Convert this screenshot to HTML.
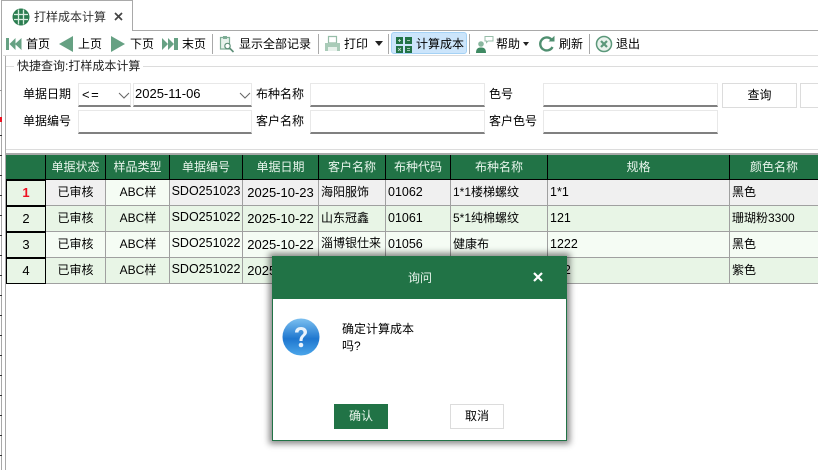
<!DOCTYPE html>
<html lang="zh"><head><meta charset="utf-8"><style>
html,body{margin:0;padding:0;background:#fff}
#p{position:relative;width:818px;height:470px;overflow:hidden;background:#fff;font:12px/16px "Liberation Sans","Noto Sans CJK SC",sans-serif;color:#000}
#p div,#p span,#p svg{position:absolute}
.t{white-space:nowrap}
.l{background:#a9a9a9}
.tk{left:0;width:2px;height:1px;background:#333}
.inp{background:#fff;border:1px solid #e8e8e8;border-bottom:2px solid #808080;box-sizing:border-box;height:24px}
.c{box-sizing:border-box;text-align:center;white-space:nowrap;line-height:25px;height:26px;border-right:1px solid #a0a0a0;border-bottom:1px solid #a0a0a0;overflow:hidden}
.h{background:#217346;color:#e8f5ec;border-right:1px solid #000;height:24px;line-height:24px;border-bottom:0;top:155px}
.left{text-align:left;padding-left:2px}
.n{font-size:12.5px}
.d{font-size:13px}
.num{background:#e8f5e6;border:1px solid #000;border-top-width:2px;border-right-width:1px;font-size:13px;line-height:24px}
</style></head><body><div id="p">

<div class="l" style="left:2px;top:0;width:130px;height:1px"></div>
<div class="l" style="left:1px;top:0;width:1px;height:470px"></div>
<div class="l" style="left:132px;top:0;width:1px;height:31px"></div>
<div class="l" style="left:132px;top:30px;width:686px;height:1px"></div>
<div style="left:3px;top:55px;width:815px;height:1px;background:#ddd"></div>

<div class="tk" style="top:90px;background:#999"></div>
<div style="left:0;top:117px;width:2px;height:5px;background:#ee1122"></div>
<div class="tk" style="top:135px"></div>
<div class="tk" style="top:155px"></div>
<div class="tk" style="top:175px"></div>
<div class="tk" style="top:195px"></div>
<div class="tk" style="top:215px"></div>
<div class="tk" style="top:235px"></div>
<div class="tk" style="top:255px"></div>
<div class="tk" style="top:275px"></div>
<div class="tk" style="top:295px"></div>
<div class="tk" style="top:315px"></div>
<div class="tk" style="top:335px"></div>
<div class="tk" style="top:355px"></div>
<div class="tk" style="top:375px"></div>
<div class="tk" style="top:395px"></div>
<div class="tk" style="top:415px"></div>
<div class="tk" style="top:435px"></div>
<div class="tk" style="top:455px"></div>

<svg style="left:12px;top:8px" width="18" height="18" viewBox="0 0 18 18"><circle cx="9" cy="9" r="8.500" fill="#2b7d50"/><path d="M2 6.500H16M2 11.500H16M6.500 1.500V16.500M11.500 1.500V16.500" stroke="#d9eee0" stroke-width="1.300" fill="none"/></svg>
<span class="t" style="left:34px;top:9px;font-size:12px;color:#333">打样成本计算</span>
<svg style="left:114px;top:12px" width="9" height="9" viewBox="0 0 9 9"><path d="M1 1L8 8M8 1L1 8" stroke="#444" stroke-width="1.700"/></svg>

<svg style="left:6px;top:37px" width="16" height="14" viewBox="0 0 16 14"><path d="M0 1H3V13H0ZM3.500 7L9.500 1V13ZM9 7L15.500 1V13Z" fill="#66a183"/></svg>
<span class="t" style="left:26px;top:36px">首页</span>
<svg style="left:59px;top:36px" width="15" height="16" viewBox="0 0 15 16"><path d="M14 0V16L0 8Z" fill="#66a183"/></svg>
<span class="t" style="left:78px;top:36px">上页</span>
<svg style="left:111px;top:36px" width="15" height="16" viewBox="0 0 15 16"><path d="M0 0V16L14 8Z" fill="#66a183"/></svg>
<span class="t" style="left:130px;top:36px">下页</span>
<svg style="left:162px;top:37px" width="16" height="14" viewBox="0 0 16 14"><path d="M0 1L6 7L0 13ZM6 1L12 7L6 13ZM12 1H16V13H12Z" fill="#66a183"/></svg>
<span class="t" style="left:182px;top:36px">末页</span>
<div class="l" style="left:212px;top:34px;width:1px;height:20px"></div>

<svg style="left:219px;top:35px" width="16" height="18" viewBox="0 0 16 18"><path d="M1.500 2.500H10.500V14H1.500Z" fill="#e8f2ec" stroke="#7fae96" stroke-width="1.200"/><path d="M4 1H8V4H4Z" fill="#7fae96"/><circle cx="8.500" cy="11" r="2.700" fill="#fff" stroke="#5d8f78" stroke-width="1.200"/><path d="M10.500 13L14.500 17" stroke="#5d8f78" stroke-width="1.600"/></svg>
<span class="t" style="left:239px;top:36px">显示全部记录</span>
<div class="l" style="left:318px;top:34px;width:1px;height:20px"></div>

<svg style="left:324px;top:35px" width="17" height="17" viewBox="0 0 17 17"><path d="M4.500 1.500H12.500V8H4.500Z" fill="#fff" stroke="#96bda8" stroke-width="1.200"/><path d="M1 8H16V16H1Z" fill="#a9cbb8"/><path d="M4 12H13V16H4Z" fill="#e7f1eb"/></svg>
<span class="t" style="left:344px;top:36px">打印</span>
<svg style="left:375px;top:41px" width="8" height="5" viewBox="0 0 8 5"><path d="M0 0H8L4 5Z" fill="#222"/></svg>
<div class="l" style="left:388px;top:34px;width:1px;height:20px"></div>

<div style="left:391px;top:32px;width:76px;height:22px;background:#cce5fb;border:1px solid #a5d2f5;border-radius:3px;box-sizing:border-box"></div>
<svg style="left:396px;top:37px" width="16" height="16" viewBox="0 0 16 16"><path d="M0 0H7V7H0ZM9 0H16V7H9ZM0 9H7V16H0ZM9 9H16V16H9Z" fill="#217346"/><path d="M2 3.500H5M3.500 2V5M11 3.500H14M2 11L5 14M5 11L2 14M11 11.500H14M11 13.500H14" stroke="#cfe5d8" stroke-width=".8"/></svg>
<span class="t" style="left:416px;top:36px">计算成本</span>
<div class="l" style="left:469px;top:34px;width:1px;height:20px"></div>

<svg style="left:476px;top:35px" width="18" height="18" viewBox="0 0 18 18"><circle cx="5" cy="9" r="2.800" fill="#8ab79f"/><path d="M0 18C0 13.500 2 12.500 5 12.500S10 13.500 10 18Z" fill="#3f8a63"/><path d="M9 1.500H17V6H12L10.500 7.500V6H9Z" fill="#fff" stroke="#97bda9" stroke-width="1"/></svg>
<span class="t" style="left:496px;top:36px">帮助</span>
<svg style="left:523px;top:42px" width="6" height="4" viewBox="0 0 6 4"><path d="M0 0H6L3 4Z" fill="#222"/></svg>

<svg style="left:538px;top:35px" width="18" height="18" viewBox="0 0 18 18"><path d="M14.500 12A6.500 6.500 0 1 1 13.500 4.500" fill="none" stroke="#4f8f70" stroke-width="2.400"/><path d="M10.500 6.500H16.500V0.800Z" fill="#4f8f70"/></svg>
<span class="t" style="left:559px;top:36px">刷新</span>
<div class="l" style="left:589px;top:34px;width:1px;height:20px"></div>

<svg style="left:595px;top:35px" width="18" height="18" viewBox="0 0 18 18"><circle cx="9" cy="9" r="7.500" fill="#e9f3ed" stroke="#5b987a" stroke-width="1.500"/><path d="M6 6L12 12M12 6L6 12" stroke="#5b987a" stroke-width="2.200"/></svg>
<span class="t" style="left:616px;top:36px">退出</span>

<div style="left:5px;top:66px;width:813px;height:84px;border:1px solid #dcdcdc;box-sizing:border-box;border-right:0"></div>
<span class="t" style="left:14px;top:58px;background:#fff;padding:0 3px;color:#222">快捷查询:打样成本计算</span>
<div class="l" style="left:5px;top:153px;width:813px;height:1px"></div>
<div class="l" style="left:5px;top:56px;width:1px;height:414px"></div>

<span class="t" style="left:23px;top:86px">单据日期</span>
<div class="inp" style="left:78px;top:83px;width:53px"></div>
<span class="t" style="left:82px;top:87px;font-size:13px;letter-spacing:1.500px">&lt;=</span>
<svg style="left:118px;top:92px" width="12" height="7" viewBox="0 0 12 7"><path d="M1 1L6 6L11 1" fill="none" stroke="#666"/></svg>
<div class="inp" style="left:133px;top:83px;width:119px"></div>
<span class="t" style="left:135px;top:86px;font-size:13px">2025-11-06</span>
<svg style="left:239px;top:92px" width="12" height="7" viewBox="0 0 12 7"><path d="M1 1L6 6L11 1" fill="none" stroke="#666"/></svg>
<span class="t" style="left:256px;top:86px">布种名称</span>
<div class="inp" style="left:310px;top:83px;width:175px"></div>
<span class="t" style="left:489px;top:86px">色号</span>
<div class="inp" style="left:543px;top:83px;width:175px"></div>
<div style="left:722px;top:83px;width:75px;height:25px;border:1px solid #dcdcdc;box-sizing:border-box;text-align:center;line-height:23px">查询</div>
<div style="left:800px;top:83px;width:30px;height:25px;border:1px solid #dcdcdc;box-sizing:border-box"></div>

<span class="t" style="left:23px;top:113px">单据编号</span>
<div class="inp" style="left:78px;top:110px;width:174px"></div>
<span class="t" style="left:256px;top:113px">客户名称</span>
<div class="inp" style="left:310px;top:110px;width:175px"></div>
<span class="t" style="left:489px;top:113px">客户色号</span>
<div class="inp" style="left:543px;top:110px;width:175px"></div>

<div class="l" style="left:5px;top:154px;width:813px;height:1px"></div>

<div class="c h" style="left:6px;width:40px"></div>
<div class="c h" style="left:46px;width:60px">单据状态</div>
<div class="c h" style="left:106px;width:64px">样品类型</div>
<div class="c h" style="left:170px;width:73px">单据编号</div>
<div class="c h" style="left:243px;width:76px">单据日期</div>
<div class="c h" style="left:319px;width:67px">客户名称</div>
<div class="c h" style="left:386px;width:65px">布种代码</div>
<div class="c h" style="left:451px;width:97px">布种名称</div>
<div class="c h" style="left:548px;width:182px">规格</div>
<div class="c h" style="left:730px;width:88px;border-right:0">颜色名称</div>
<div style="left:6px;top:179px;width:812px;height:1px;background:#000"></div>

<div style="left:46px;top:180px;width:772px;height:26px;background:#f0f0f0"></div>
<div style="left:106px;top:180px;width:64px;height:26px;background:#f5fcf4"></div>
<div style="left:46px;top:206px;width:772px;height:26px;background:#e8f5e6"></div>
<div style="left:46px;top:232px;width:772px;height:26px;background:#f5fcf4"></div>
<div style="left:46px;top:258px;width:772px;height:26px;background:#e8f5e6"></div>

<div class="c num" style="left:6px;top:179px;width:40px;height:27px;color:#ee1122;font-weight:bold">1</div>
<div class="c num" style="left:6px;top:205px;width:40px;height:27px">2</div>
<div class="c num" style="left:6px;top:231px;width:40px;height:27px">3</div>
<div class="c num" style="left:6px;top:257px;width:40px;height:27px">4</div>

<div class="c" style="left:46px;top:180px;width:60px">已审核</div>
<div class="c" style="left:106px;top:180px;width:64px;padding-left:1px">ABC样</div>
<div class="c n" style="left:170px;top:180px;width:73px;line-height:22px">SDO251023</div>
<div class="c d" style="left:243px;top:180px;width:76px">2025-10-23</div>
<div class="c left" style="left:319px;top:180px;width:67px">海阳服饰</div>
<div class="c left n" style="left:386px;top:180px;width:65px">01062</div>
<div class="c left" style="left:451px;top:180px;width:97px">1*1楼梯螺纹</div>
<div class="c left n" style="left:548px;top:180px;width:182px">1*1</div>
<div class="c left" style="left:730px;top:180px;width:88px;border-right:0">黑色</div>

<div class="c" style="left:46px;top:206px;width:60px">已审核</div>
<div class="c" style="left:106px;top:206px;width:64px;padding-left:1px">ABC样</div>
<div class="c n" style="left:170px;top:206px;width:73px;line-height:22px">SDO251022</div>
<div class="c d" style="left:243px;top:206px;width:76px">2025-10-22</div>
<div class="c left" style="left:319px;top:206px;width:67px">山东冠鑫</div>
<div class="c left n" style="left:386px;top:206px;width:65px">01061</div>
<div class="c left" style="left:451px;top:206px;width:97px">5*1纯棉螺纹</div>
<div class="c left n" style="left:548px;top:206px;width:182px">121</div>
<div class="c left" style="left:730px;top:206px;width:88px;border-right:0">珊瑚粉3300</div>

<div class="c" style="left:46px;top:232px;width:60px">已审核</div>
<div class="c" style="left:106px;top:232px;width:64px;padding-left:1px">ABC样</div>
<div class="c n" style="left:170px;top:232px;width:73px;line-height:22px">SDO251022</div>
<div class="c d" style="left:243px;top:232px;width:76px">2025-10-22</div>
<div class="c left" style="left:319px;top:232px;width:67px;line-height:22px">淄博银仕来</div>
<div class="c left n" style="left:386px;top:232px;width:65px">01056</div>
<div class="c left" style="left:451px;top:232px;width:97px">健康布</div>
<div class="c left n" style="left:548px;top:232px;width:182px">1222</div>
<div class="c left" style="left:730px;top:232px;width:88px;border-right:0">黑色</div>

<div class="c" style="left:46px;top:258px;width:60px">已审核</div>
<div class="c" style="left:106px;top:258px;width:64px;padding-left:1px">ABC样</div>
<div class="c n" style="left:170px;top:258px;width:73px;line-height:22px">SDO251022</div>
<div class="c d" style="left:243px;top:258px;width:76px">2025-10-22</div>
<div class="c left" style="left:319px;top:258px;width:67px"></div>
<div class="c left" style="left:386px;top:258px;width:65px"></div>
<div class="c left" style="left:451px;top:258px;width:97px"></div>
<div class="c left n" style="left:548px;top:258px;width:182px">122</div>
<div class="c left" style="left:730px;top:258px;width:88px;border-right:0">紫色</div>

<div style="left:272px;top:256px;width:295px;height:185px;background:#fff;border:1px solid #217346;box-sizing:border-box;box-shadow:0 0 6px 3px rgba(0,0,0,.45)"></div>
<div style="left:272px;top:256px;width:295px;height:43px;background:#217346"></div>
<span class="t" style="left:408px;top:270px;color:#e8f5ec">询问</span>
<svg style="left:533px;top:272px" width="10" height="10" viewBox="0 0 10 10"><path d="M1 1L9 9M9 1L1 9" stroke="#fff" stroke-width="2.200"/></svg>
<svg style="left:282px;top:318px" width="40" height="40" viewBox="0 0 40 40"><defs><linearGradient id="g" x1="0" y1="0" x2="0" y2="1"><stop offset="0" stop-color="#7cc0f0"/><stop offset=".55" stop-color="#1f77cf"/><stop offset="1" stop-color="#4ba6ea"/></linearGradient></defs><circle cx="19" cy="19" r="18.500" fill="url(#g)"/><path d="M13 14.500C13 10.500 16 9 19 9C22.500 9 25 11 25 14C25 18 20.500 18 20.500 23H17.500C17.500 17 21.500 17 21.500 14.500C21.500 13 20.500 12 19 12C17.500 12 16.500 13 16.500 14.500Z" fill="#e9f3fc"/><circle cx="19" cy="27" r="2.300" fill="#e9f3fc"/></svg>
<span class="t" style="left:342px;top:321px">确定计算成本</span>
<span class="t" style="left:342px;top:338px">吗?</span>
<div style="left:334px;top:404px;width:54px;height:25px;background:#217346;color:#e8f5ec;text-align:center;line-height:24px">确认</div>
<div style="left:450px;top:404px;width:54px;height:25px;background:#fff;border:1px solid #dcdcdc;box-sizing:border-box;text-align:center;line-height:23px">取消</div>

</div></body></html>
